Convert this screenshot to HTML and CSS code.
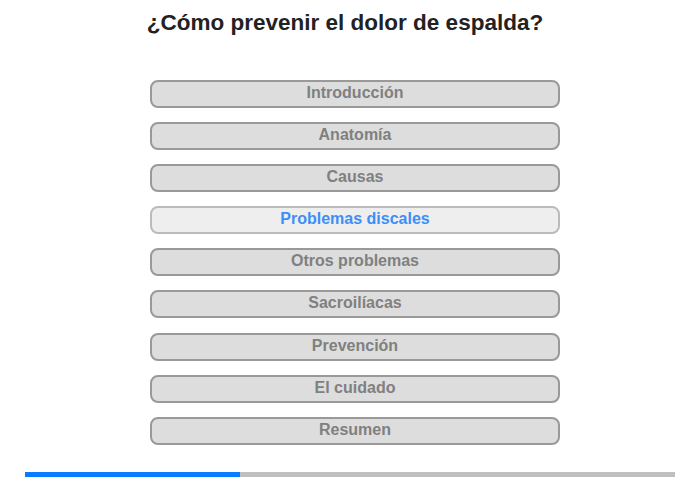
FILE: index.html
```html
<!DOCTYPE html>
<html lang="es">
<head>
  <meta charset="UTF-8">
  <title>¿Cómo prevenir el dolor de espalda?</title>
  <link rel="stylesheet" href="styles.css">
</head>
<body>
<h1 class="title">¿Cómo prevenir el dolor de espalda?</h1>
<div class="menu">
  <a class="menu-btn" href="#">Introducción</a>
  <a class="menu-btn" href="#">Anatomía</a>
  <a class="menu-btn" href="#">Causas</a>
  <a class="menu-btn active" href="#">Problemas discales</a>
  <a class="menu-btn" href="#">Otros problemas</a>
  <a class="menu-btn" href="#">Sacroilíacas</a>
  <a class="menu-btn" href="#">Prevención</a>
  <a class="menu-btn" href="#">El cuidado</a>
  <a class="menu-btn" href="#">Resumen</a>
</div>
<div class="progress">
  <div class="progress-fill" style="width: 33%"></div>
</div>
</body>
</html>
```

FILE: styles.css
```css
body {
  margin: 0;
  font-family: "Liberation Sans", Arial, sans-serif;
  background-color: #fff;
}
.title {
  margin: 0;
  padding: 10px 10px 0 0;
  height: 80px;
  box-sizing: border-box;
  text-align: center;
  font-size: 22.5px;
  line-height: 26px;
  font-weight: bold;
  color: #222;
}
.menu {
  padding-left: 10px;
  display: flex;
  flex-direction: column;
  align-items: center;
  gap: 14.1px;
}
.menu-btn {
  display: block;
  width: 410px;
  height: 28px;
  box-sizing: border-box;
  line-height: 22px;
  text-align: center;
  text-decoration: none;
  font-size: 16px;
  font-weight: bold;
  color: #808080;
  background-color: #ddd;
  border: 2px solid #999;
  border-radius: 8px;
}
.menu-btn.active {
  color: #3d8ef8;
  background-color: #eee;
  border-color: #bbb;
}
.progress {
  margin: 27px 25px 0;
  height: 5px;
  background-color: #c0c0c0;
}
.progress-fill {
  height: 100%;
  background-color: #0a7cff;
}
```
